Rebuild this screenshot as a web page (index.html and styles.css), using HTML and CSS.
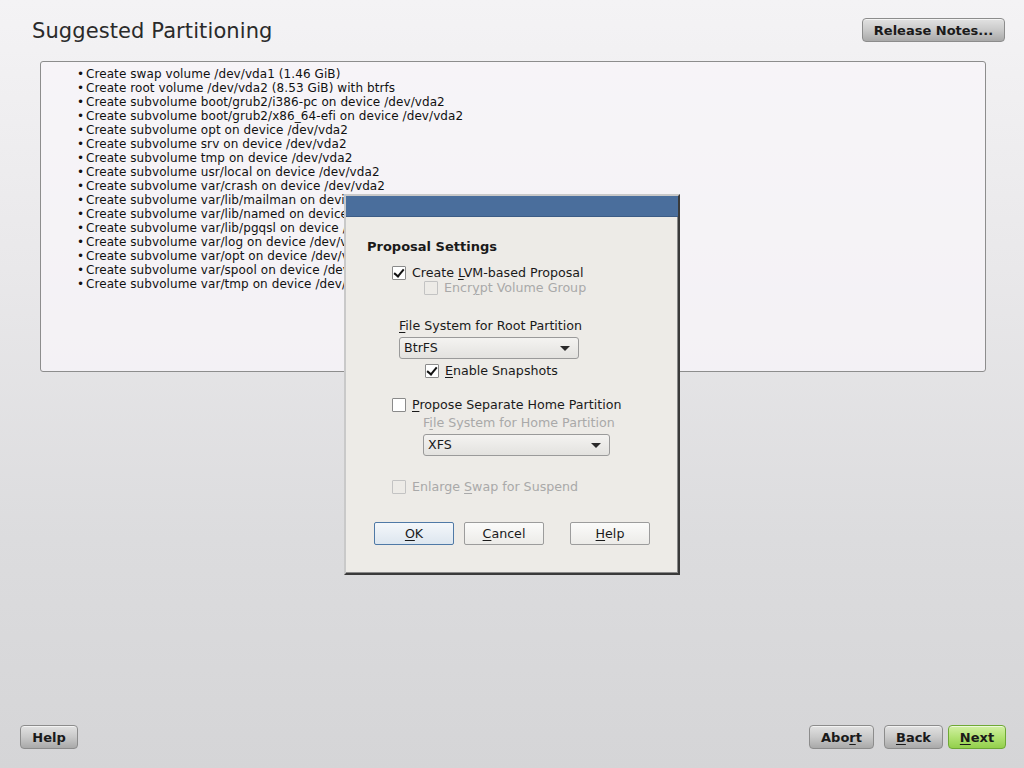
FILE: index.html
```html
<!DOCTYPE html>
<html>
<head>
<meta charset="utf-8">
<link rel="stylesheet" href="styles.css">
</head>
<body>
<div class="screen">
  <header class="top">
    <h1 class="title">Suggested Partitioning</h1>
    <button class="btn rel">Release Notes...</button>
  </header>
  <main class="content">
    <ul class="list">
      <li>Create swap volume /dev/vda1 (1.46 GiB)</li>
      <li>Create root volume /dev/vda2 (8.53 GiB) with btrfs</li>
      <li>Create subvolume boot/grub2/i386-pc on device /dev/vda2</li>
      <li>Create subvolume boot/grub2/x86_64-efi on device /dev/vda2</li>
      <li>Create subvolume opt on device /dev/vda2</li>
      <li>Create subvolume srv on device /dev/vda2</li>
      <li>Create subvolume tmp on device /dev/vda2</li>
      <li>Create subvolume usr/local on device /dev/vda2</li>
      <li>Create subvolume var/crash on device /dev/vda2</li>
      <li>Create subvolume var/lib/mailman on device /dev/vda2</li>
      <li>Create subvolume var/lib/named on device /dev/vda2</li>
      <li>Create subvolume var/lib/pgqsl on device /dev/vda2</li>
      <li>Create subvolume var/log on device /dev/vda2</li>
      <li>Create subvolume var/opt on device /dev/vda2</li>
      <li>Create subvolume var/spool on device /dev/vda2</li>
      <li>Create subvolume var/tmp on device /dev/vda2</li>
    </ul>
  </main>
  <footer class="bottom">
    <button class="btn help">Help</button>
    <div class="nav">
      <button class="btn abort">Abo<u>r</u>t</button>
      <button class="btn back"><u>B</u>ack</button>
      <button class="btn next"><u>N</u>ext</button>
    </div>
  </footer>

  <div class="dialog">
    <div class="dtitle"></div>
    <div class="dbody">
      <h2 class="dhead">Proposal Settings</h2>
      <label class="cb lvl1"><span class="box on"></span><span class="t">Create <u>L</u>VM-based Proposal</span></label>
      <label class="cb lvl2 dis"><span class="box"></span><span class="t">Encr<u>y</u>pt Volume Group</span></label>

      <div class="field root">
        <div class="flabel"><u>F</u>ile System for Root Partition</div>
        <div class="combo c1">BtrFS<span class="arrow"></span></div>
        <label class="cb snap"><span class="box on"></span><span class="t"><u>E</u>nable Snapshots</span></label>
      </div>

      <label class="cb lvl1 home"><span class="box"></span><span class="t"><u>P</u>ropose Separate Home Partition</span></label>
      <div class="field homefs">
        <div class="flabel dis">F<u>i</u>le System for Home Partition</div>
        <div class="combo c2">XFS<span class="arrow"></span></div>
      </div>

      <label class="cb lvl1 dis swap"><span class="box"></span><span class="t">Enlarge <u>S</u>wap for Suspend</span></label>

      <div class="dbtns">
        <button class="dbtn ok"><u>O</u>K</button>
        <button class="dbtn"><u>C</u>ancel</button>
        <button class="dbtn hlp"><u>H</u>elp</button>
      </div>
    </div>
  </div>
</div>
</body>
</html>
```

FILE: styles.css
```css
* { box-sizing: border-box; }
html, body { margin: 0; padding: 0; }
body {
  width: 1024px;
  height: 768px;
  overflow: hidden;
  font-family: "DejaVu Sans", sans-serif;
  color: #1a1a1a;
  background: linear-gradient(180deg, #f4f3f5 0%, #e9e8ea 35%, #dcdcde 70%, #d5d5d7 100%);
}
.screen {
  position: relative;
  width: 1024px;
  height: 768px;
  display: flex;
  flex-direction: column;
}
.top {
  display: flex;
  justify-content: space-between;
  align-items: flex-start;
  padding: 18px 19px 0 32px;
  height: 61px;
}
.title {
  margin: 0;
  font-size: 21px;
  font-weight: normal;
  color: #2a2a2a;
  line-height: 26px;
  letter-spacing: 0.1px;
}
.btn {
  font-family: "DejaVu Sans", sans-serif;
  font-weight: bold;
  font-size: 13px;
  color: #1a1a1a;
  height: 24px;
  padding: 0 8px;
  border: 1px solid #8c8c8c;
  border-radius: 4px;
  background: linear-gradient(180deg, #e2e2e2 0%, #c9c9c9 50%, #a9a9a9 100%);
  box-shadow: inset 0 1px 0 rgba(255,255,255,0.6);
}
.btn u { text-decoration: underline; text-underline-offset: 2px; }
.rel { width: 143px; }
.content {
  padding: 0 38px 0 40px;
}
.list {
  margin: 0;
  height: 311px;
  border: 1px solid #8d8d8d;
  border-radius: 3px;
  background: rgba(248,246,249,0.75);
  list-style: none;
  padding: 5px 0 0 35px;
  font-size: 12px;
  line-height: 14px;
  color: #111;
  letter-spacing: 0.08px;
}
.list li::before {
  content: "\2022";
  display: inline-block;
  width: 9px;
  margin-left: 1px;
}
.bottom {
  margin-top: auto;
  display: flex;
  justify-content: space-between;
  align-items: center;
  padding: 0 18px 19px 20px;
}
.help { width: 58px; }
.nav { display: flex; }
.abort { width: 65px; margin-right: 10px; }
.back { width: 59px; margin-right: 5px; }
.next {
  width: 58px;
  border-color: #6ea835;
  background: linear-gradient(180deg, #d2f0a4 0%, #b2e273 50%, #93cf4c 100%);
}

/* dialog overlay */
.dialog {
  position: absolute;
  left: 344px;
  top: 194px;
  width: 336px;
  height: 381px;
  background: #edebe7;
  border-top: 2px solid #c9c9c9;
  border-left: 2px solid #c9c9c9;
  border-right: 2px solid #3a3a3a;
  border-bottom: 2px solid #3a3a3a;
  box-shadow: inset -1px -1px 0 #8a8a8a;
  display: flex;
  flex-direction: column;
}
.dtitle {
  height: 21px;
  background: #4a6e9c;
  border-bottom: 1px solid #3c5c86;
}
.dbody {
  position: relative;
  flex: 1;
  padding: 22px 0 0 21px;
  font-size: 12.65px;
  color: #1a1a1a;
}
.dhead {
  margin: 0 0 10px 0;
  font-size: 13px;
  font-weight: bold;
  line-height: 16px;
}
.dbody u { text-decoration: underline; text-underline-offset: 2px; }
.cb {
  display: flex;
  align-items: center;
  line-height: 15px;
  height: 15px;
}
.t { white-space: pre; }
.box {
  flex: none;
  width: 14px;
  height: 14px;
  border: 1px solid #8a8a8a;
  background: #fff;
  margin-right: 6px;
  position: relative;
  border-radius: 1px;
}
.box.on::after {
  content: "";
  position: absolute;
  left: 3px;
  top: 0px;
  width: 4px;
  height: 8px;
  border-right: 2px solid #111;
  border-bottom: 2px solid #111;
  transform: rotate(40deg);
}
.dis { color: #a9a9a9; }
.cb.dis .box { border-color: #c3c3c3; background: transparent; }
.lvl1 { margin-left: 25px; }
.lvl2 { margin-left: 57px; }
.field { margin-left: 32px; }
.root { margin-top: 23px; }
.flabel { line-height: 16px; height: 16px; }
.combo {
  position: relative;
  margin-top: 3px;
  height: 22px;
  border: 1px solid #9a9a9a;
  border-radius: 3px;
  background: linear-gradient(180deg, #f4f3f1 0%, #e3e2df 100%);
  padding: 0 0 0 4px;
  line-height: 20px;
}
.c1 { width: 180px; }
.arrow {
  position: absolute;
  right: 8px;
  top: 8px;
  width: 0; height: 0;
  border-left: 5px solid transparent;
  border-right: 5px solid transparent;
  border-top: 5px solid #2a2a2a;
}
.snap { margin-left: 26px; margin-top: 4px; }
.home { margin-top: 19px; }
.homefs { margin-left: 56px; margin-top: 3px; }
.c2 { width: 187px; margin-top: 3px; }
.swap { margin-top: 23px; }
.dbtns {
  display: flex;
  margin-top: 28px;
  margin-left: 7px;
}
.dbtn {
  font-family: "DejaVu Sans", sans-serif;
  font-size: 12.65px;
  color: #1a1a1a;
  width: 80px;
  height: 23px;
  border: 1px solid #9c9c9c;
  border-radius: 2px;
  background: linear-gradient(180deg, #fbfbfa 0%, #ecebe8 100%);
  margin-right: 10px;
  padding: 0;
}
.dbtn.ok {
  border-color: #4f79a6;
  background: linear-gradient(180deg, #f4f7fa 0%, #dde6ef 100%);
}
.dbtn.hlp { margin-left: 16px; }
```
